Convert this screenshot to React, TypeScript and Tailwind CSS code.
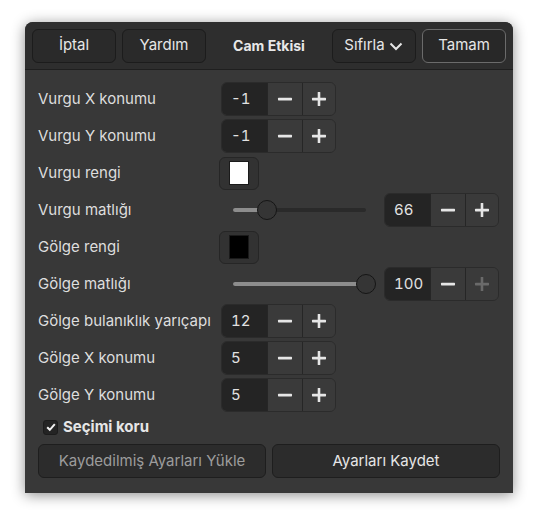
import React from "react"

const font = { fontFamily: "Inter, 'Noto Sans', sans-serif" }

function Minus({ dim }: { dim?: boolean }) {
  return (
    <svg width="16" height="16" viewBox="0 0 16 16">
      <rect x="1" y="6.8" width="14" height="2.6" rx="0.6" fill={dim ? "#6a6a6a" : "#e6e6e6"} />
    </svg>
  )
}

function Plus({ dim }: { dim?: boolean }) {
  const c = dim ? "#6a6a6a" : "#e6e6e6"
  return (
    <svg width="16" height="16" viewBox="0 0 16 16">
      <rect x="1" y="6.8" width="14" height="2.6" rx="0.6" fill={c} />
      <rect x="6.7" y="1" width="2.6" height="14" rx="0.6" fill={c} />
    </svg>
  )
}

function Spin({ value, plusDim }: { value: string; plusDim?: boolean }) {
  return (
    <div className="flex h-[34px] w-[115px] overflow-hidden rounded-[6px] border border-[#2b2b2b]">
      <div className="flex w-[45px] items-center bg-[#242424] pl-[9px] text-[15px] text-[#e2e2e2] tabular-nums">{value}</div>
      <div className="flex w-[35px] items-center justify-center border-l border-[#262626] bg-[#3a3a3a]">
        <Minus />
      </div>
      <div className="flex flex-1 items-center justify-center border-l border-[#262626] bg-[#3a3a3a]">
        <Plus dim={plusDim} />
      </div>
    </div>
  )
}

function Swatch({ color }: { color: string }) {
  return (
    <div className="-ml-[2px] flex h-[33px] w-[40px] items-center justify-center rounded-[6px] border border-[#262626] bg-[#323232]">
      <div className="h-[24px] w-[20px] border border-[#1a1a1a]" style={{ background: color }} />
    </div>
  )
}

function Slider({ pct }: { pct: number }) {
  return (
    <div className="flex w-[163px] items-center">
      <div className="relative ml-[12px] h-[4px] w-[133px] rounded-full bg-[#2a2a2a]">
        <div className="h-full rounded-full bg-[#8d8d8d]" style={{ width: `${pct}%` }} />
        <div
          className="absolute top-1/2 h-[20px] w-[20px] -translate-x-1/2 -translate-y-1/2 rounded-full border border-[#151515] bg-[#353535]"
          style={{ left: `${pct}%` }}
        />
      </div>
    </div>
  )
}

function Row({ label, children }: { label: string; children: React.ReactNode }) {
  return (
    <div className="flex h-[34px] items-center">
      <div className="w-[183px] text-[15px] text-[#dedede]">{label}</div>
      {children}
    </div>
  )
}

function HeaderButton({ children, focus }: { children: React.ReactNode; focus?: boolean }) {
  return (
    <div
      className={
        focus
          ? "flex h-[34px] w-[84px] items-center justify-center rounded-[6px] border border-[#6b6b6b] bg-[#282828] text-[15px] text-[#e6e6e6]"
          : "flex h-[34px] w-[84px] items-center justify-center rounded-[6px] border border-[#1c1c1c] bg-[#2a2a2a] text-[15px] text-[#e6e6e6]"
      }
    >
      {children}
    </div>
  )
}

export default function App() {
  return (
    <div className="h-[522px] w-[538px] bg-white pt-[22px] pl-[25px]" style={font}>
      <div className="w-[488px] h-[471px] overflow-hidden rounded-t-[8px] bg-[#383838] shadow-[0_2px_14px_rgba(0,0,0,0.45)]">
        <div className="flex h-[48px] items-center gap-[6px] border-b border-[#1f1f1f] bg-[#2e2e2e] px-[7px]">
          <HeaderButton>İptal</HeaderButton>
          <HeaderButton>Yardım</HeaderButton>
          <div className="flex-1 text-center text-[14px] font-bold text-[#e8e8e8]">Cam Etkisi</div>
          <HeaderButton>
            <span className="flex items-center gap-[3px]">
              Sıfırla
              <svg width="16" height="16" viewBox="0 0 16 16">
                <path d="M2.5 5.5 L8 11 L13.5 5.5" stroke="#e6e6e6" strokeWidth="2" fill="none" />
              </svg>
            </span>
          </HeaderButton>
          <HeaderButton focus>Tamam</HeaderButton>
        </div>
        <div className="flex flex-col gap-[3px] px-[13px] pt-[12px]">
          <Row label="Vurgu X konumu"><Spin value="-1" /></Row>
          <Row label="Vurgu Y konumu"><Spin value="-1" /></Row>
          <Row label="Vurgu rengi"><Swatch color="#ffffff" /></Row>
          <Row label="Vurgu matlığı">
            <Slider pct={25.5} />
            <Spin value="66" />
          </Row>
          <Row label="Gölge rengi"><Swatch color="#000000" /></Row>
          <Row label="Gölge matlığı">
            <Slider pct={100} />
            <Spin value="100" plusDim />
          </Row>
          <Row label="Gölge bulanıklık yarıçapı"><Spin value="12" /></Row>
          <Row label="Gölge X konumu"><Spin value="5" /></Row>
          <Row label="Gölge Y konumu"><Spin value="5" /></Row>
          <div className="mt-[2px] flex h-[20px] items-center gap-[5px] pl-[5px]">
            <div className="flex h-[15px] w-[15px] items-center justify-center rounded-[3px] border border-[#1c1c1c] bg-[#242424]">
              <svg width="10" height="10" viewBox="0 0 10 10">
                <path d="M1.2 5.2 L3.8 7.8 L8.8 2.2" stroke="#f0f0f0" strokeWidth="2" fill="none" />
              </svg>
            </div>
            <span className="text-[15px] font-bold text-[#e6e6e6]">Seçimi koru</span>
          </div>
          <div className="mt-[4px] flex gap-[6px]">
            <div className="flex h-[34px] flex-1 items-center justify-center rounded-[6px] border border-[#1e1e1e] bg-[#2c2c2c] text-[15px] text-[#9c9c9c]">
              Kaydedilmiş Ayarları Yükle
            </div>
            <div className="flex h-[34px] flex-1 items-center justify-center rounded-[6px] border border-[#1e1e1e] bg-[#2c2c2c] text-[15px] text-[#e6e6e6]">
              Ayarları Kaydet
            </div>
          </div>
        </div>
      </div>
    </div>
  )
}
